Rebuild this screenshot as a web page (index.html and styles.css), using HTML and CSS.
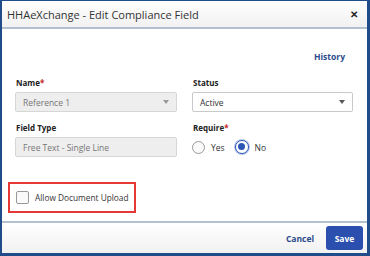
FILE: index.html
```html
<!DOCTYPE html>
<html>
<head>
<meta charset="utf-8">
<link rel="stylesheet" href="styles.css">
</head>
<body>
<div class="dialog">
  <div class="header">
    <div class="title">HHAeXchange - Edit Compliance Field</div>
    <div class="close">&#x2715;</div>
  </div>
  <div class="content">
    <div class="history-row"><a class="history">History</a></div>
    <div class="grid">
      <div class="field">
        <div class="label">Name<span class="req">*</span></div>
        <div class="input disabled"><span>Reference 1</span><span class="caret disabled-caret"></span></div>
      </div>
      <div class="field">
        <div class="label">Status</div>
        <div class="input"><span>Active</span><span class="caret"></span></div>
      </div>
      <div class="field">
        <div class="label">Field Type</div>
        <div class="input disabled"><span>Free Text - Single Line</span></div>
      </div>
      <div class="field">
        <div class="label">Require<span class="req">*</span></div>
        <div class="radios">
          <span class="radio"></span><span class="rlabel">Yes</span>
          <span class="radio checked"></span><span class="rlabel">No</span>
        </div>
      </div>
    </div>
    <div class="upload">
      <span class="checkbox"></span><span class="clabel">Allow Document Upload</span>
    </div>
  </div>
  <div class="footer">
    <a class="cancel">Cancel</a>
    <button class="save">Save</button>
  </div>
</div>
</body>
</html>
```
FILE: styles.css
```css
* { box-sizing: border-box; }
html, body { margin: 0; padding: 0; }
body { width: 370px; height: 256px; font-family: "Open Sans", "Liberation Sans", sans-serif; background: #fff; }
.dialog {
  width: 370px; height: 256px;
  border-style: solid; border-color: #204d89;
  border-width: 1px 3px 3px 2px;
  display: flex; flex-direction: column;
  background: #fff;
}
.header {
  height: 28px; flex: none;
  display: flex; align-items: center; justify-content: space-between;
  padding: 0 9px 0 5px;
  background: linear-gradient(#ffffff, #f1f1f1);
  border-bottom: 2px solid #b3c0d0;
}
.title { font-size: 11px; color: #333; }
.close { font-size: 10px; font-weight: bold; color: #222; }
.content { flex: 1; padding: 22px 14px 0 13px; }
.history-row { display: flex; justify-content: flex-end; padding-right: 8px; height: 14px; }
.history { font-size: 8.5px; font-weight: bold; color: #2b4a8b; }
.grid { display: grid; grid-template-columns: 162px 161px; column-gap: 15px; row-gap: 10px; margin-top: 12px; }
.label { font-size: 8px; font-weight: bold; color: #222; height: 12px; line-height: 12px; margin-bottom: 3px; padding-left: 1px; }
.req { color: #c62828; }
.input {
  height: 20px; border: 1px solid #c9c9c9; border-radius: 2px;
  display: flex; align-items: center; justify-content: space-between;
  padding: 0 7px; font-size: 8.5px; color: #333; background: #fff;
}
.input.disabled { background: #eeeeee; color: #777; border-color: #d6d6d6; }
.caret { width: 0; height: 0; border-left: 3px solid transparent; border-right: 3px solid transparent; border-top: 4px solid #555; }
.disabled-caret { border-top-color: #999; }
.radios { display: flex; align-items: center; height: 20px; }
.radio { width: 13px; height: 13px; border: 1px solid #999; border-radius: 50%; background: #fafafa; flex: none; }
.radio.checked { width: 14px; height: 14px; border: 1.5px solid #2d55b8; background: #fff; position: relative; box-shadow: 0 0 0 1px #b9c7ea; }
.radio.checked::after { content: ""; position: absolute; left: 2px; top: 2px; width: 7px; height: 7px; border-radius: 50%; background: #2d55b8; }
.rlabel { font-size: 8.5px; color: #333; margin: 0 10px 0 6px; }
.upload {
  margin-top: 25px; margin-left: -7px;
  width: 128px; height: 31px;
  border: 2px solid #e53935;
  display: flex; align-items: center; padding-left: 6px;
}
.checkbox { width: 13px; height: 13px; border: 1px solid #999; border-radius: 2px; background: #fafafa; }
.clabel { font-size: 8.3px; color: #333; margin-left: 6px; }
.footer {
  height: 32px; flex: none;
  border-top: 2px solid #b3c0d0;
  background: linear-gradient(#ffffff, #f1f1f1);
  display: flex; align-items: center; justify-content: flex-end;
  padding: 0 4px 0 0;
}
.cancel { font-size: 8.5px; font-weight: bold; color: #2b4a8b; margin-right: 12px; }
.save {
  width: 37px; height: 24px; background: #2b4fae; color: #fff;
  border: none; border-radius: 3px; font-family: inherit; font-size: 8.5px; font-weight: bold;
}
```
